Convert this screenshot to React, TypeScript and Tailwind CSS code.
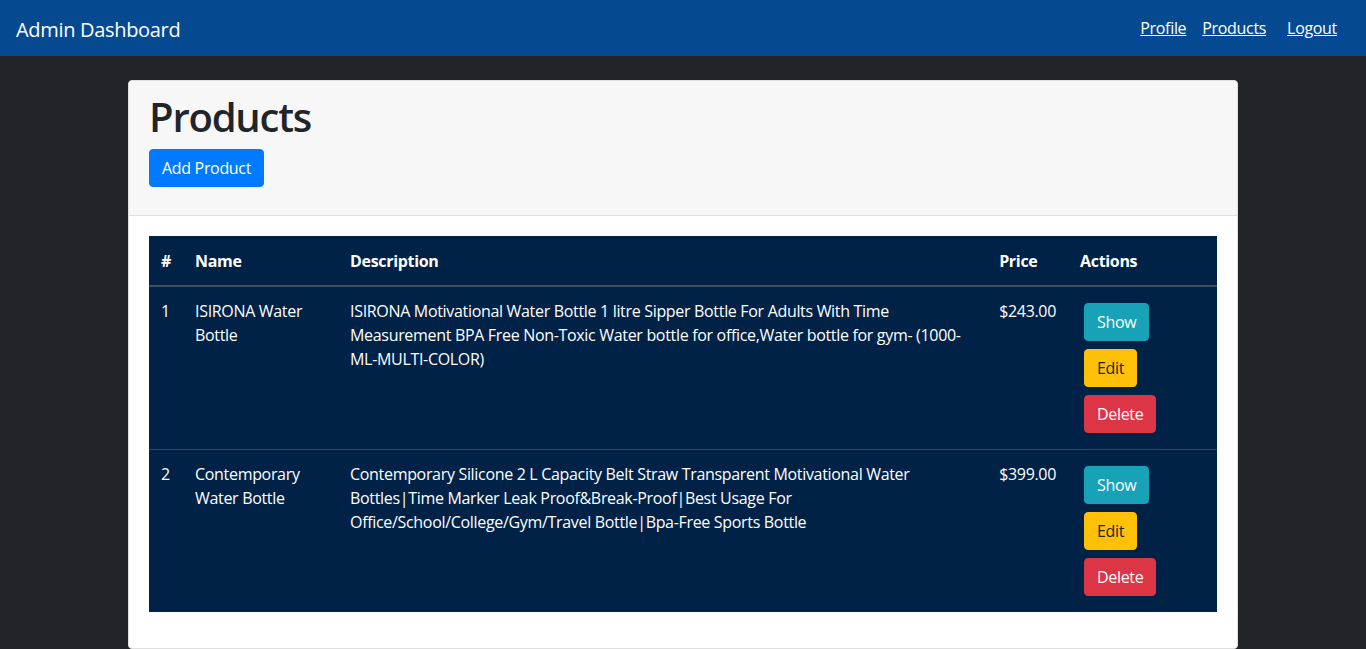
import React from "react";

type Product = {
  id: number;
  name: string;
  description: string;
  price: string;
};

const products: Product[] = [
  {
    id: 1,
    name: "ISIRONA Water Bottle",
    description:
      "ISIRONA Motivational Water Bottle 1 litre Sipper Bottle For Adults With Time Measurement BPA Free Non-Toxic Water bottle for office,Water bottle for gym- (1000-ML-MULTI-COLOR)",
    price: "$243.00",
  },
  {
    id: 2,
    name: "Contemporary Water Bottle",
    description:
      "Contemporary Silicone 2 L Capacity Belt Straw Transparent Motivational Water Bottles|Time Marker Leak Proof&Break-Proof|Best Usage For Office/School/College/Gym/Travel Bottle|Bpa-Free Sports Bottle",
    price: "$399.00",
  },
];

const App: React.FC = () => {
  return (
    <div className="min-h-screen bg-[#212529] font-['Open_Sans',sans-serif] text-base leading-6 tracking-[-0.02em] text-[#212529]">
      {/* Navbar */}
      <nav className="h-14 bg-[#054a91] flex items-center justify-between pl-4 pr-[21px]">
        <span className="mt-[3px] text-xl text-white">Admin Dashboard</span>
        <div className="flex items-center">
          <a href="#" className="px-2 text-white underline">Profile</a>
          <a href="#" className="px-2 text-white underline">Products</a>
          <a href="#" className="ml-[5px] px-2 text-white underline">Logout</a>
        </div>
      </nav>

      {/* Card */}
      <div className="max-w-[1110px] mx-auto mt-6 bg-white border border-[#dfdfdf] rounded">
        <div className="bg-[#f7f7f7] border-b border-[#dfdfdf] px-5 pt-3 pb-7 rounded-t">
          <h1 className="text-[40px] leading-[48px] font-semibold tracking-[-0.03em] mb-2">Products</h1>
          <button className="bg-[#007bff] text-white rounded px-3 py-[6px] border border-[#007bff]">
            Add Product
          </button>
        </div>

        <div className="p-5">
          <table className="w-full bg-[#002247] text-white mb-4 border-collapse">
            <thead>
              <tr className="border-b-2 border-[#454d55] text-left">
                <th className="px-3 pt-[13px] pb-3 w-[34px] font-bold">#</th>
                <th className="px-3 pt-[13px] pb-3 w-[155px] font-bold">Name</th>
                <th className="px-3 pt-[13px] pb-3 font-bold">Description</th>
                <th className="px-3 pt-[13px] pb-3 w-[79px] font-bold">Price</th>
                <th className="px-3 pt-[13px] pb-3 w-[149px] font-bold">Actions</th>
              </tr>
            </thead>
            <tbody>
              {products.map((p) => (
                <tr key={p.id} className="border-t border-[#3c4653] align-top">
                  <td className="p-3">{p.id}</td>
                  <td className="p-3">{p.name}</td>
                  <td className="p-3">{p.description}</td>
                  <td className="p-3">{p.price}</td>
                  <td className="p-3">
                    <div className="flex flex-col items-start">
                      <button className="m-1 bg-[#17a2b8] text-white rounded px-3 py-[6px] border border-[#17a2b8]">Show</button>
                      <button className="m-1 bg-[#ffc107] text-[#212529] rounded px-3 py-[6px] border border-[#ffc107]">Edit</button>
                      <button className="m-1 bg-[#dc3545] text-white rounded px-3 py-[6px] border border-[#dc3545]">Delete</button>
                    </div>
                  </td>
                </tr>
              ))}
            </tbody>
          </table>
        </div>
      </div>
    </div>
  );
};

export default App;
